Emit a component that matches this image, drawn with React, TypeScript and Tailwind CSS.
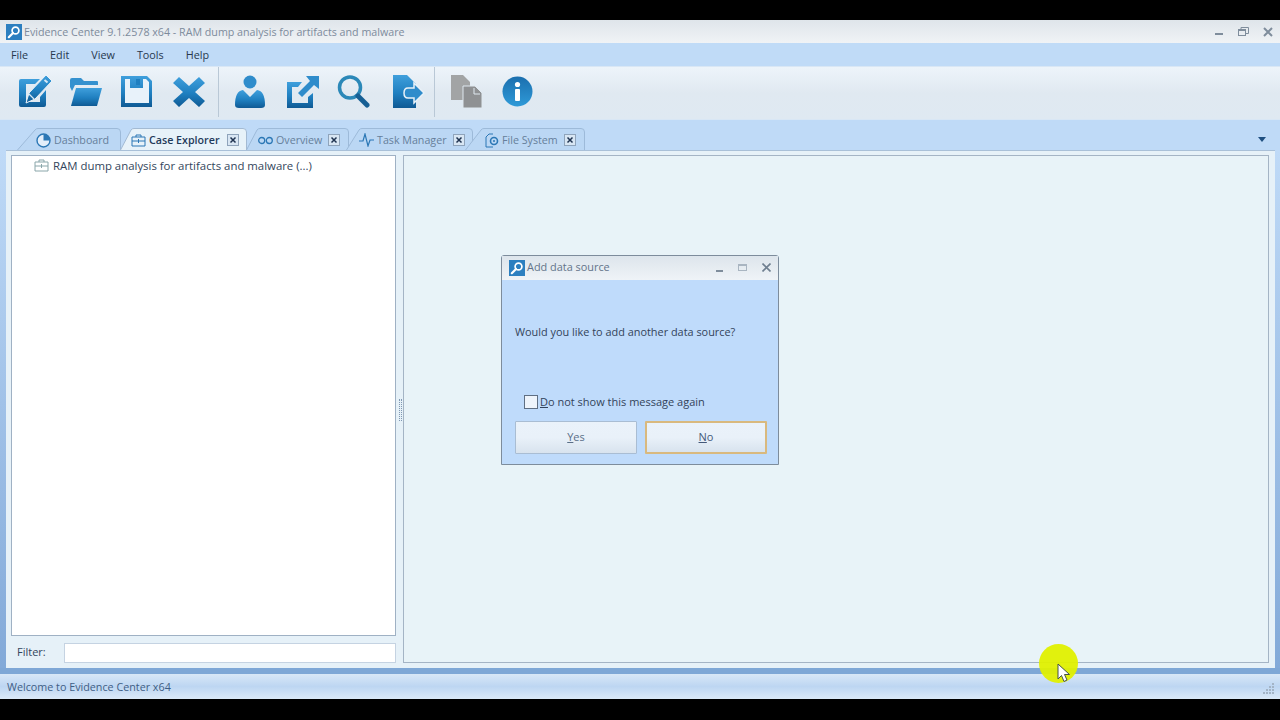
import React from "react";

const Grad = ({ id }: { id: string }) => (
  <defs>
    <linearGradient id={id} x1="0" y1="0" x2="0" y2="1">
      <stop offset="0" stopColor="#3f9fdc" />
      <stop offset="0.55" stopColor="#1f7fc0" />
      <stop offset="1" stopColor="#0f5a94" />
    </linearGradient>
  </defs>
);

const AppLogo = ({ size }: { size: number }) => (
  <svg width={size} height={size} viewBox="0 0 16 16" className="shrink-0">
    <rect width="16" height="16" fill="#2c7fc0" />
    <circle cx="9.5" cy="6.5" r="3.4" fill="#2c7fc0" stroke="#fff" strokeWidth="1.7" />
    <path d="M7 9 L2.8 13.2" stroke="#fff" strokeWidth="2.2" strokeLinecap="round" />
  </svg>
);

const Pen = () => (
  <svg width="34" height="34" viewBox="0 0 34 34">
    <Grad id="g1" />
    <path d="M2 4 H21 L16 9 H7 V27 H21 V22 L27 15 V30 Q27 32 25 32 H2 Q0 32 0 30 V6 Q0 4 2 4 Z" fill="url(#g1)" />
    <path d="M27 0 L33 6 L16 24 L7 28 L10 18 Z" fill="url(#g1)" stroke="#e9f2f9" strokeWidth="1" />
    <path d="M25.5 5 L28.5 7.5" stroke="#d7e8f5" strokeWidth="2" />
    <path d="M10 19 L15 24" stroke="#d7e8f5" strokeWidth="1.2" />
  </svg>
);
const Folder = () => (
  <svg width="33" height="30" viewBox="0 0 33 30">
    <Grad id="g2" />
    <path d="M1 10 V3 Q1 1 3 1 H12 L15 4 H28 Q29 4 29 5 V8 H6 L3 14 Z" fill="#3591cf" />
    <path d="M7 11 H33 L28 29 H2 Z" fill="url(#g2)" />
  </svg>
);
const Save = () => (
  <svg width="33" height="33" viewBox="0 0 33 33">
    <Grad id="g3" />
    <path d="M1 1 H27 L32 6 V32 H1 Z" fill="url(#g3)" />
    <path d="M5 4 H10 V13 H23 V4 H26 L29 7 V28 H5 Z" fill="#e8f2fa" />
    <rect x="16" y="4" width="4" height="6" fill="#1f7fc0" />
  </svg>
);
const Cross = () => (
  <svg width="32" height="30" viewBox="0 0 32 30">
    <Grad id="g4" />
    <path d="M6 0 L16 9 L26 0 L32 6 L22 15 L32 24 L26 30 L16 21 L6 30 L0 24 L10 15 L0 6 Z" fill="url(#g4)" />
  </svg>
);
const User = () => (
  <svg width="30" height="33" viewBox="0 0 30 33">
    <Grad id="g5" />
    <circle cx="15" cy="7" r="6.5" fill="#2f8ccb" />
    <path d="M0 30 Q0 16 8 15 L15 22 L22 15 Q30 16 30 30 Q30 33 26 33 H4 Q0 33 0 30 Z" fill="url(#g5)" />
  </svg>
);
const Share = () => (
  <svg width="32" height="32" viewBox="0 0 32 32">
    <Grad id="g6" />
    <path d="M0 6 H15 L11 11 H5 V27 H21 V21 L26 17 V32 H0 Z" fill="url(#g6)" />
    <path d="M19 0 H32 V13 L27 9 L15 21 L11 17 L23 5 Z" fill="#2f8ccb" />
  </svg>
);
const Search = () => (
  <svg width="33" height="33" viewBox="0 0 33 33">
    <circle cx="13" cy="12.5" r="10.5" fill="none" stroke="#2b88b8" strokeWidth="3.5" />
    <path d="M21 21 L30 30" stroke="#165f94" strokeWidth="5" strokeLinecap="round" />
  </svg>
);
const DocArrow = () => (
  <svg width="32" height="33" viewBox="0 0 32 33">
    <Grad id="g7" />
    <path d="M0 0 H14 L23 9 V33 H0 Z" fill="url(#g7)" />
    <path d="M21 8 L31 18 L21 28 V23 H15 Q11 23 11 18 Q11 13 15 13 H21 Z" fill="#2f8ccb" stroke="#e8f1f8" strokeWidth="1.5" />
  </svg>
);
const Copy = () => (
  <svg width="31" height="33" viewBox="0 0 31 33">
    <path d="M0 0 H12 L19 7 V25 H0 Z" fill="#a2a4a5" />
    <path d="M12 11 H24 L31 18 V33 H12 Z" fill="#8f9193" stroke="#dfe8ef" strokeWidth="1" />
    <path d="M23 13 V19 H29" fill="none" stroke="#dfe8ef" strokeWidth="1" />
  </svg>
);
const Info = () => (
  <svg width="31" height="31" viewBox="0 0 31 31">
    <defs>
      <linearGradient id="g8" x1="0" y1="0" x2="0" y2="1">
        <stop offset="0" stopColor="#1b6fae" />
        <stop offset="1" stopColor="#2f9ad8" />
      </linearGradient>
    </defs>
    <circle cx="15.5" cy="15.5" r="15" fill="url(#g8)" />
    <circle cx="15.5" cy="8.5" r="2.6" fill="#fff" />
    <rect x="13" y="13" width="5" height="12" rx="1" fill="#fff" />
  </svg>
);

const TabClose = () => (
  <svg width="12" height="12" viewBox="0 0 12 12" className="block">
    <rect x="0.5" y="0.5" width="11" height="11" fill="#d8e6f3" stroke="#8fa4bb" />
    <path d="M3.5 3.5 L8.5 8.5 M8.5 3.5 L3.5 8.5" stroke="#1f3350" strokeWidth="1.5" />
  </svg>
);

const Tab = ({
  icon,
  label,
  width,
  slope,
  className,
  active,
  close,
}: {
  icon: React.ReactNode;
  label: string;
  width: number;
  slope: number;
  className: string;
  active?: boolean;
  close?: boolean;
}) => (
  <div className={`relative h-[22px] flex items-center shrink-0 pt-[3px] ${active ? "z-10" : ""} ${className}`} style={{ width }}>
    <svg className="absolute left-0 top-0" width={width} height="22" viewBox={`0 0 ${width} 22`}>
      <path
        d={`M0.5 22 L${slope} 2 Q${slope + 1} 0.5 ${slope + 3} 0.5 H${width - 4} Q${width - 0.5} 0.5 ${width - 0.5} 4 V22`}
        fill={active ? "#e7f2f9" : "#bbd7f4"}
        stroke={active ? "#a3bad3" : "#9dbad9"}
      />
    </svg>
    <span className="relative flex items-center gap-[3px] w-full">
      {icon}
      <span className={`text-[10.7px] whitespace-nowrap ${active ? "text-[#1f3a5a] font-semibold" : "text-[#667f9b]"}`}>{label}</span>
      {close && <span className="ml-auto"><TabClose /></span>}
    </span>
  </div>
);

const TreeBox = () => (
  <svg width="15" height="13" viewBox="0 0 15 13" className="shrink-0">
    <path d="M5 3 V1 H10 V3 M1 3 H14 V12 H1 Z M1 7 H14 M7.5 5 V9" fill="none" stroke="#8aa6aa" />
  </svg>
);

export default function App() {
  return (
    <div
      className="relative w-[1280px] h-[720px] overflow-hidden bg-black flex flex-col pt-[20px] pb-[21px] text-[#2b3a4d]"
      style={{ fontFamily: '"Open Sans", "Noto Sans", sans-serif' }}
    >
      {/* title bar */}
      <div className="h-[23px] shrink-0 flex items-center pl-[6px] pr-[7px] bg-gradient-to-b from-[#dfe5ea] to-[#f0f3f6]">
        <AppLogo size={16} />
        <span className="ml-[2px] pt-[2px] text-[10.7px] text-[#7d8b9c] whitespace-nowrap">
          Evidence Center 9.1.2578 x64 - RAM dump analysis for artifacts and malware
        </span>
        <div className="ml-auto flex items-center gap-[14px]">
          <svg width="9" height="9" viewBox="0 0 9 9"><rect x="0" y="6" width="8" height="2" fill="#7f8d9c" /></svg>
          <svg width="11" height="9" viewBox="0 0 11 9"><rect x="0.5" y="2.5" width="7" height="6" fill="none" stroke="#7f8d9c" /><path d="M3 2.5 V0.5 H10.5 V6.5 H8" fill="none" stroke="#7f8d9c" /><rect x="0" y="2" width="8" height="2" fill="#7f8d9c" /></svg>
          <svg width="10" height="10" viewBox="0 0 10 10"><path d="M1 1 L9 9 M9 1 L1 9" stroke="#7f8d9c" strokeWidth="2" /></svg>
        </div>
      </div>
      {/* menu */}
      <div className="h-[23px] shrink-0 flex items-center pl-[11px] pt-[2px] gap-[22px] bg-[#c0dbf7] text-[10.8px] text-[#27384e]">
        <span>File</span>
        <span>Edit</span>
        <span>View</span>
        <span>Tools</span>
        <span>Help</span>
      </div>
      {/* toolbar */}
      <div className="h-[54px] shrink-0 flex items-center pl-[19px] pb-[3px] border-y border-[#d9e7f5] bg-gradient-to-b from-[#edf4fa] via-[#e0e9f1] to-[#dfe9f2]">
        <div className="flex items-center">
          <Pen />
          <div className="ml-[16px]"><Folder /></div>
          <div className="ml-[18px]"><Save /></div>
          <div className="ml-[20px]"><Cross /></div>
        </div>
        <div className="w-px h-[50px] bg-[#b9c8d6] ml-[13px]" />
        <div className="flex items-center ml-[16px]">
          <User />
          <div className="ml-[22px]"><Share /></div>
          <div className="ml-[18px]"><Search /></div>
          <div className="ml-[23px]"><DocArrow /></div>
        </div>
        <div className="w-px h-[50px] bg-[#b9c8d6] ml-[9px]" />
        <div className="flex items-center ml-[16px]">
          <Copy />
          <div className="ml-[20px]"><Info /></div>
        </div>
      </div>
      {/* tabs */}
      <div className="h-[30px] shrink-0 flex items-end pl-[17px] pr-[14px] bg-[#bfdaf7]">
        <Tab width={104} slope={18} className="-mr-[1px] pl-[19px]" label="Dashboard" icon={
          <svg width="15" height="15" viewBox="0 0 15 15"><circle cx="7.5" cy="7.5" r="6.5" fill="#e3eefa" stroke="#2b77b5" strokeWidth="1.4" /><path d="M7.5 7.5 V1 A6.5 6.5 0 0 1 14 7.5 Z" fill="#2b77b5" /></svg>
        } />
        <Tab width={127} slope={11} active close className="-mr-[1px] pl-[11px] pr-[8px]" label="Case Explorer" icon={
          <svg width="15" height="13" viewBox="0 0 15 13"><path d="M5 3 V1 H10 V3 M1 3 H14 V12 H1 Z M1 7 H14 M7.5 5 V9" fill="none" stroke="#2b77b5" /></svg>
        } />
        <Tab width={103} slope={11} close className="-mr-[3px] pl-[12px] pr-[9px]" label="Overview" icon={
          <svg width="15" height="9" viewBox="0 0 15 9"><circle cx="3.7" cy="4.5" r="3" fill="none" stroke="#2b77b5" strokeWidth="1.3" /><circle cx="11.3" cy="4.5" r="3" fill="none" stroke="#2b77b5" strokeWidth="1.3" /></svg>
        } />
        <Tab width={127} slope={13} close className="-mr-[8px] pl-[13px] pr-[8px]" label="Task Manager" icon={
          <svg width="15" height="14" viewBox="0 0 15 14"><path d="M0 8 H4 L6 1 L9 13 L11 7 H15" fill="none" stroke="#2b77b5" strokeWidth="1.2" /></svg>
        } />
        <Tab width={120} slope={16} close className="pl-[20px] pr-[9px]" label="File System" icon={
          <svg width="14" height="15" viewBox="0 0 14 15"><path d="M4 1 H8 M4 1 L1 4 V14 H8" fill="none" stroke="#2b77b5" /><circle cx="9" cy="8" r="3.5" fill="none" stroke="#2b77b5" strokeWidth="1.6" /><circle cx="9" cy="8" r="1" fill="#2b77b5" /></svg>
        } />
        <svg className="ml-auto mb-[8px]" width="8" height="5" viewBox="0 0 8 5"><path d="M0 0 H8 L4 5 Z" fill="#1f4f80" /></svg>
      </div>
      {/* body */}
      <div className="flex-1 min-h-0 flex flex-col bg-[#e6f1f8]">
        <div className="flex-1 min-h-0 flex pl-[6px] pr-[5px] bg-gradient-to-b from-[#bfdaf7] to-[#82a9d8]">
          <div className="flex-1 min-w-0 flex gap-[7px] bg-[#e6f1f8] border-t border-[#a9c0d8] pt-[4px] pl-[5px] pr-[6px] pb-[5px]">
            <div className="w-[385px] shrink-0 flex flex-col">
              <div className="flex-1 bg-white border border-[#9fb1c4] flex items-start pt-[1px] pl-[22px]">
                <div className="flex items-center gap-[4px] h-[17px]">
                  <TreeBox />
                  <span className="text-[11.4px] text-[#33465c] whitespace-nowrap">RAM dump analysis for artifacts and malware (...)</span>
                </div>
              </div>
              <div className="h-[27px] shrink-0 flex items-center pt-[6px] pl-[6px]">
                <span className="w-[47px] text-[11px] text-[#33465c]">Filter:</span>
                <div className="flex-1 h-[20px] bg-white border border-[#c5d3e2]" />
              </div>
            </div>
            <div className="relative flex-1 min-w-0">
              <div className="absolute left-[-4px] top-[244px] w-[3px] h-[22px] border-x border-dotted border-[#7f97b2]" />
              <div className="h-full bg-[#e8f3f8] border border-[#a4b4c5]" />
            </div>
          </div>
        </div>
        <div className="h-[6px] shrink-0 bg-[#7ea7d6]" />
        <div className="h-[25px] shrink-0 flex items-center pl-[7px] pr-[5px] pt-[2px] bg-gradient-to-b from-[#d8e7f7] via-[#bdd6f2] to-[#dbe9f8] text-[10.75px] text-[#3f5e85]">
          <span>Welcome to Evidence Center x64</span>
          <svg className="ml-auto" width="12" height="12" viewBox="0 0 12 12" fill="#a3b4c6">
            <rect x="9" y="1" width="2" height="2" /><rect x="6" y="4" width="2" height="2" /><rect x="9" y="4" width="2" height="2" />
            <rect x="3" y="7" width="2" height="2" /><rect x="6" y="7" width="2" height="2" /><rect x="9" y="7" width="2" height="2" />
            <rect x="0" y="10" width="2" height="2" /><rect x="3" y="10" width="2" height="2" /><rect x="6" y="10" width="2" height="2" /><rect x="9" y="10" width="2" height="2" />
          </svg>
        </div>
      </div>

      {/* dialog */}
      <div className="absolute left-[501px] top-[255px] w-[278px] h-[210px] flex flex-col bg-[#bfdbfb] border border-[#7d8c9c] rounded-t-[3px]">
        <div className="h-[24px] shrink-0 flex items-center pl-[7px] pr-[7px] pb-[1px] bg-gradient-to-b from-[#dde5ec] to-[#eff3f7]">
          <AppLogo size={16} />
          <span className="ml-[2px] text-[10.9px] text-[#63748a]">Add data source</span>
          <div className="ml-auto flex items-center gap-[14px]">
            <svg width="9" height="9" viewBox="0 0 9 9"><rect x="1" y="7" width="7" height="2" fill="#7f8d9c" /></svg>
            <svg width="10" height="9" viewBox="0 0 10 9"><rect x="0.5" y="1.5" width="8" height="6" fill="none" stroke="#a9b5c1" /><rect x="0" y="1" width="9" height="2" fill="#a9b5c1" /></svg>
            <svg width="9" height="9" viewBox="0 0 9 9"><path d="M0.5 0.5 L8.5 8.5 M8.5 0.5 L0.5 8.5" stroke="#6f7f90" strokeWidth="1.6" /></svg>
          </div>
        </div>
        <div className="flex-1 flex flex-col px-[13px]">
          <div className="mt-[44px] text-[10.9px] text-[#33435a] leading-[16px] whitespace-nowrap">Would you like to add another data source?</div>
          <div className="mt-[54px] flex items-center pl-[9px] h-[16px] text-[11px] text-[#33435a]">
            <span className="w-[14px] h-[14px] bg-[#eef4fb] border border-[#5f6f83] mr-[2px]" />
            <span className="whitespace-nowrap"><u>D</u>o not show this message again</span>
          </div>
          <div className="mt-[11px] flex justify-between w-[252px]">
            <div className="w-[122px] h-[33px] flex items-center justify-center rounded-[1px] border border-[#a9bdd3] bg-gradient-to-b from-[#eaf2fa] via-[#e9f1f9] to-[#d8e3ee] text-[11px] text-[#5a6f88]">
              <span><u>Y</u>es</span>
            </div>
            <div className="w-[122px] h-[33px] flex items-center justify-center rounded-[1px] border-2 border-[#d9b97e] bg-gradient-to-b from-[#eaf2fa] via-[#e9f1f9] to-[#d8e3ee] text-[11px] text-[#44597a]">
              <span><u>N</u>o</span>
            </div>
          </div>
        </div>
      </div>

      {/* cursor highlight */}
      <div className="absolute left-[1039px] top-[644px] w-[39px] h-[39px] rounded-full bg-[#e0f000]/95" />
      <svg className="absolute left-[1057px] top-[663px]" width="14" height="20" viewBox="0 0 14 20">
        <path d="M1 1 V16 L4.5 12.5 L7 18.5 L10 17 L7.5 11.5 H12.5 Z" fill="#fff" stroke="#44504a" strokeWidth="1" />
      </svg>
    </div>
  );
}
